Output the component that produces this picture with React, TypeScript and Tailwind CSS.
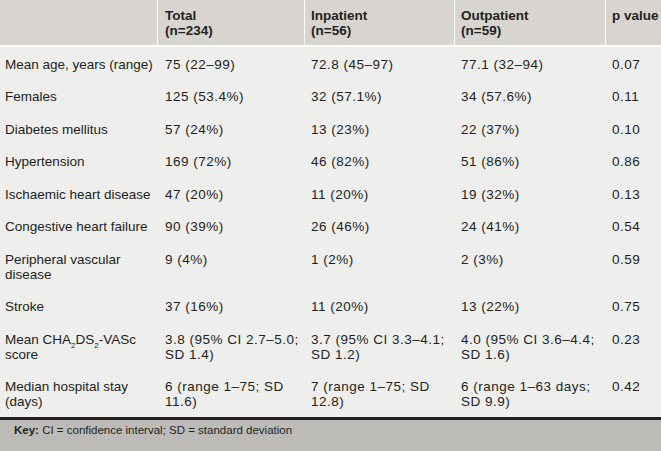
import React from "react";

type Row = {
  label: React.ReactNode[];
  total: string[];
  inpatient: string[];
  outpatient: string[];
  p: string;
};

const rows: Row[] = [
  { label: ["Mean age, years (range)"], total: ["75 (22–99)"], inpatient: ["72.8 (45–97)"], outpatient: ["77.1 (32–94)"], p: "0.07" },
  { label: ["Females"], total: ["125 (53.4%)"], inpatient: ["32 (57.1%)"], outpatient: ["34 (57.6%)"], p: "0.11" },
  { label: ["Diabetes mellitus"], total: ["57 (24%)"], inpatient: ["13 (23%)"], outpatient: ["22 (37%)"], p: "0.10" },
  { label: ["Hypertension"], total: ["169 (72%)"], inpatient: ["46 (82%)"], outpatient: ["51 (86%)"], p: "0.86" },
  { label: ["Ischaemic heart disease"], total: ["47 (20%)"], inpatient: ["11 (20%)"], outpatient: ["19 (32%)"], p: "0.13" },
  { label: ["Congestive heart failure"], total: ["90 (39%)"], inpatient: ["26 (46%)"], outpatient: ["24 (41%)"], p: "0.54" },
  { label: ["Peripheral vascular", "disease"], total: ["9 (4%)"], inpatient: ["1 (2%)"], outpatient: ["2 (3%)"], p: "0.59" },
  { label: ["Stroke"], total: ["37 (16%)"], inpatient: ["11 (20%)"], outpatient: ["13 (22%)"], p: "0.75" },
  {
    label: [
      <>
        Mean CHA<sub className="text-[8px] bottom-[-4px]">2</sub>DS<sub className="text-[8px] bottom-[-4px]">2</sub>-VASc
      </>,
      "score",
    ],
    total: ["3.8 (95% CI 2.7–5.0;", "SD 1.4)"],
    inpatient: ["3.7 (95% CI 3.3–4.1;", "SD 1.2)"],
    outpatient: ["4.0 (95% CI 3.6–4.4;", "SD 1.6)"],
    p: "0.23",
  },
  {
    label: ["Median hospital stay", "(days)"],
    total: ["6 (range 1–75; SD", "11.6)"],
    inpatient: ["7 (range 1–75; SD", "12.8)"],
    outpatient: ["6 (range 1–63 days;", "SD 9.9)"],
    p: "0.42",
  },
];

const cols = "grid grid-cols-[157px_147px_150px_151px_1fr]";

function Lines({ lines }: { lines: React.ReactNode[] }) {
  return (
    <>
      {lines.map((l, i) => (
        <div key={i} className="whitespace-nowrap">
          {l}
        </div>
      ))}
    </>
  );
}

export default function App() {
  return (
    <div
      className="w-[661px] h-[451px] flex flex-col bg-[#eeeeec] text-[#231f20] text-[13.5px] leading-[15px] overflow-hidden"
      style={{ fontFamily: '"Liberation Sans", Arial, sans-serif' }}
    >
      {/* Header */}
      <div className={`${cols} h-[47px] bg-[#d8d5d1] border-b-2 border-white font-bold`}>
        <div />
        <div className="border-l border-white pl-[7px] pt-[8px]">
          Total
          <br />
          (n=234)
        </div>
        <div className="border-l border-white pl-[6px] pt-[8px]">
          Inpatient
          <br />
          (n=56)
        </div>
        <div className="border-l border-white pl-[6px] pt-[8px]">
          Outpatient
          <br />
          (n=59)
        </div>
        <div className="border-l border-white pl-[6px] pt-[8px] whitespace-nowrap">p value</div>
      </div>

      {/* Body */}
      <div className="flex flex-col">
        {rows.map((r, i) => (
          <div key={i} className={`${cols} pt-[9.5px] pb-[8px]`}>
            <div className="pl-[5px]">
              <Lines lines={r.label} />
            </div>
            <div className="pl-[8px] tracking-[0.5px]">
              <Lines lines={r.total} />
            </div>
            <div className="pl-[7px] tracking-[0.5px]">
              <Lines lines={r.inpatient} />
            </div>
            <div className="pl-[7px] tracking-[0.5px]">
              <Lines lines={r.outpatient} />
            </div>
            <div className="pl-[7px] tracking-[0.5px]">{r.p}</div>
          </div>
        ))}
      </div>

      {/* Footer */}
      <div className="flex-1 bg-[#bcbbb8] border-t-[3px] border-[#231f20] pl-[14px] pt-[3px] text-[11.5px] leading-[14px]">
        <span className="font-bold">Key:</span> CI = confidence interval; SD = standard deviation
      </div>
    </div>
  );
}
